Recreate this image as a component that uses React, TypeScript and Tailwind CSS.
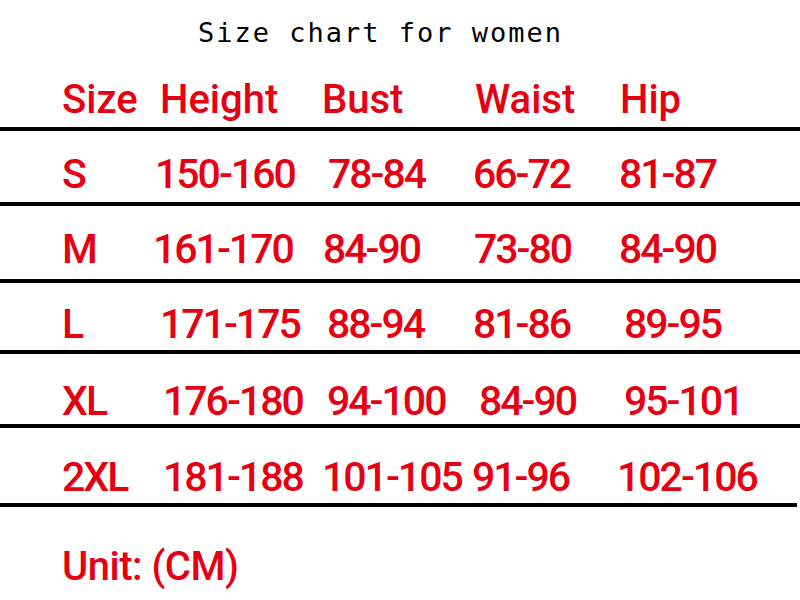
const rows = [
  {
    h: "h-[75px]",
    pt: "pt-[23px]",
    cells: [
      { t: "S", c: "" },
      { t: "150-160", c: "" },
      { t: "78-84", c: "pl-[6px]" },
      { t: "66-72", c: "pl-[1px]" },
      { t: "81-87", c: "pl-[1px]" },
    ],
  },
  {
    h: "h-[77px]",
    pt: "pt-[23px]",
    cells: [
      { t: "M", c: "" },
      { t: "161-170", c: "-ml-[2px]" },
      { t: "84-90", c: "pl-[1px]" },
      { t: "73-80", c: "pl-[2px]" },
      { t: "84-90", c: "pl-[1px]" },
    ],
  },
  {
    h: "h-[71px]",
    pt: "pt-[21px]",
    cells: [
      { t: "L", c: "" },
      { t: "171-175", c: "pl-[5px]" },
      { t: "88-94", c: "pl-[5px]" },
      { t: "81-86", c: "pl-[1px]" },
      { t: "89-95", c: "pl-[6px]" },
    ],
  },
  {
    h: "h-[74px]",
    pt: "pt-[27px]",
    cells: [
      { t: "XL", c: "" },
      { t: "176-180", c: "pl-[8px]" },
      { t: "94-100", c: "pl-[5px]" },
      { t: "84-90", c: "pl-[7px]" },
      { t: "95-101", c: "pl-[6px]" },
    ],
  },
  {
    h: "h-[79px]",
    pt: "pt-[29px]",
    cells: [
      { t: "2XL", c: "" },
      { t: "181-188", c: "pl-[8px]" },
      { t: "101-105", c: "" },
      { t: "91-96", c: "" },
      { t: "102-106", c: "-ml-[1px]" },
    ],
  },
];

const header = [
  { t: "Size", c: "" },
  { t: "Height", c: "pl-[5px]" },
  { t: "Bust", c: "" },
  { t: "Waist", c: "pl-[3px]" },
  { t: "Hip", c: "pl-[2px]" },
];

export default function App() {
  return (
    <div className="w-[800px] h-[600px] bg-white overflow-hidden font-['Roboto',sans-serif] font-medium text-[#e60012]">
      <div className="h-[62px] pt-[19px] pl-[198px] font-['DejaVu_Sans_Mono',monospace] font-normal text-[27px] leading-none tracking-[2px] text-black whitespace-nowrap">
        Size chart for women
      </div>
      <div className="h-[69px] pt-[18px] pl-[62px] border-b-4 border-black grid grid-cols-[93px_167px_150px_146px_1fr] text-[40px] leading-none whitespace-nowrap">
        {header.map((h) => (
          <div key={h.t} className={h.c}>
            {h.t}
          </div>
        ))}
      </div>
      {rows.map((r, i) => (
        <div
          key={i}
          className={`${r.h} ${r.pt} ${i === rows.length - 1 ? "w-[797px]" : "w-full"} pl-[62px] border-b-4 border-black grid grid-cols-[93px_167px_150px_146px_1fr] text-[41px] leading-none tracking-[-2px] whitespace-nowrap`}
        >
          {r.cells.map((c, j) => (
            <div key={j} className={c.c}>
              {c.t}
            </div>
          ))}
        </div>
      ))}
      <div className="mt-[40px] pl-[62px] text-[40px] leading-none tracking-[-0.5px]">
        Unit: (CM)
      </div>
    </div>
  );
}
